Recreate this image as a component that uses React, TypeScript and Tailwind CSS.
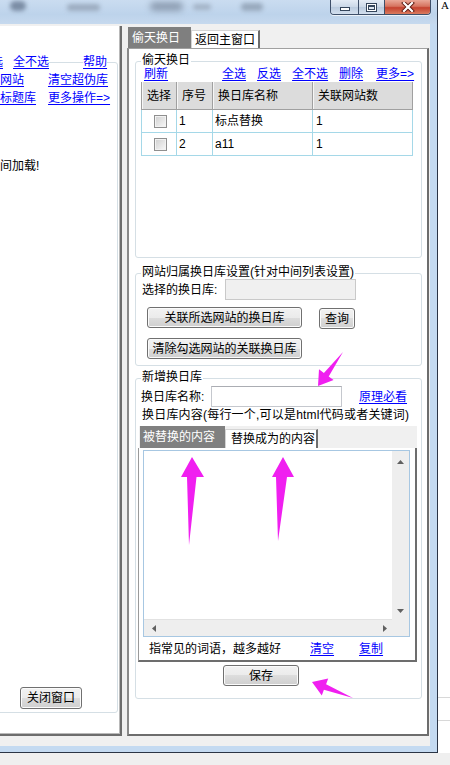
import React from "react";

function Link({ children, className = "" }: { children: React.ReactNode; className?: string }) {
  return (
    <span className={`text-[#0000ff] underline underline-offset-[2px] whitespace-nowrap leading-[14px] h-[14px] ${className}`}>
      {children}
    </span>
  );
}

function Btn({ children, className = "" }: { children: React.ReactNode; className?: string }) {
  return (
    <div
      className={`flex items-center justify-center rounded-[3px] border border-[#707070] bg-[linear-gradient(#f2f2f2,#ebebeb_50%,#dddddd_50%,#cfcfcf)] shadow-[inset_0_0_0_1px_#fbfbfb] whitespace-nowrap leading-[14px] shrink-0 ${className}`}
    >
      {children}
    </div>
  );
}

function Group({ title, className = "", children }: { title: string; className?: string; children?: React.ReactNode }) {
  return (
    <div className={`border border-[#d5dfe5] rounded-[3px] flex flex-col shrink-0 ${className}`}>
      <div className="-mt-[9px] ml-[5px] self-start bg-white px-[1px] leading-[14px] h-[14px] whitespace-nowrap">{title}</div>
      {children}
    </div>
  );
}

function CheckBox() {
  return (
    <div className="w-[13px] h-[13px] border border-[#8f8f8f] bg-[linear-gradient(135deg,#cfcfcf,#f9f9f9)] shadow-[inset_0_0_0_1px_#f2f2f2]" />
  );
}

function TitleBar() {
  return (
    <div className="h-[24px] flex items-start bg-[linear-gradient(180deg,#cadcf0,#bdd3eb_60%,#c6d9ee)] overflow-hidden shrink-0">
      <div className="ml-[10px] mt-[1px] w-[16px] h-[10px] rounded-full bg-[#7b8da5] blur-[2px]" />
      <div className="ml-[41px] mt-[4px] w-[33px] h-[7px] rounded-full bg-[#9cacc0] blur-[2px]" />
      <div className="ml-[50px] mt-[2px] w-[33px] h-[9px] rounded-full bg-[#8d9db2] blur-[3px]" />
      <div className="ml-[10px] mt-[4px] w-[18px] h-[6px] rounded-full bg-[#a3b3c6] blur-[2px]" />
      <div className="ml-[30px] mt-[3px] w-[22px] h-[8px] rounded-full bg-[#98a9bd] blur-[2px]" />
      <div className="ml-auto mr-[6px] flex h-[15px] rounded-b-[4px] border border-t-0 border-[#3e4f69] overflow-hidden shadow-[0_1px_0_rgba(255,255,255,0.7)]">
        <div className="w-[28px] bg-[linear-gradient(#e4ecf6,#cbd8e8_50%,#b9cade_50%,#d3dfee)] border-r border-[#3e4f69] flex items-center justify-center">
          <div className="mt-[4px] w-[10px] h-[4px] bg-white border border-[#35465c]" />
        </div>
        <div className="w-[26px] bg-[linear-gradient(#e4ecf6,#cbd8e8_50%,#b9cade_50%,#d3dfee)] border-r border-[#3e4f69] flex items-center justify-center">
          <div className="w-[11px] h-[9px] border border-[#35465c] bg-white p-[1px]">
            <div className="w-full h-full border border-[#35465c] border-t-2 bg-[#dfe8f2]" />
          </div>
        </div>
        <div className="w-[45px] bg-[linear-gradient(#eaa898,#d6735f_45%,#c5412e_55%,#d97b5f)] flex items-center justify-center">
          <svg width="14" height="10" viewBox="0 0 14 10">
            <path d="M3 1 L11 9 M11 1 L3 9" stroke="#5b1a12" strokeWidth="4" strokeLinecap="square" />
            <path d="M3 1 L11 9 M11 1 L3 9" stroke="#ffffff" strokeWidth="2.2" strokeLinecap="square" />
          </svg>
        </div>
      </div>
    </div>
  );
}

function LeftPanel() {
  return (
    <div className="w-[122px] h-[710px] mt-[2px] border-r-2 border-b-2 border-[#6d6d6d] overflow-hidden shrink-0">
      <div className="h-full bg-white border-r border-b border-[#b9b9b9] overflow-hidden flex flex-col">
        <div className="ml-[-60px] mt-[36px] w-[178px] h-[651px] shrink-0 border border-[#d5dfe5] rounded-[3px] flex flex-col">
          <div className="-mt-[8px] flex h-[14px] leading-[14px]">
            <Link className="ml-[38px] bg-white">反选</Link>
            <Link className="pl-[10px] bg-white">全不选</Link>
            <Link className="ml-[34px] bg-white">帮助</Link>
          </div>
          <div className="mt-[4px] flex h-[14px] leading-[14px]">
            <Link className="ml-[59px]">网站</Link>
            <Link className="ml-[24px]">清空超伪库</Link>
          </div>
          <div className="mt-[4px] flex h-[14px] leading-[14px]">
            <Link className="ml-[59px]">标题库</Link>
            <Link className="ml-[12px]">更多操作=&gt;</Link>
          </div>
          <div className="mt-[54px] ml-[59px] h-[14px] leading-[14px] whitespace-nowrap">间加载!</div>
          <Btn className="mt-auto mb-[3px] ml-[79px] w-[62px] h-[22px]">关闭窗口</Btn>
        </div>
      </div>
    </div>
  );
}

const headCell = "h-[28px] bg-[#dcdcdc] border-r border-b border-[#a0a0a0] shadow-[inset_1px_0_0_#f6f6f6] flex items-center pl-[5px] whitespace-nowrap";
const bodyCell = "h-[23px] border-r border-b border-[#a5d8e8] flex items-center pl-[2px] whitespace-nowrap";

function UpArrow() {
  return (
    <svg width="7" height="4" viewBox="0 0 7 4">
      <polygon points="3.5,0 7,4 0,4" fill="#606060" />
    </svg>
  );
}
function DownArrow() {
  return (
    <svg width="7" height="4" viewBox="0 0 7 4">
      <polygon points="0,0 7,0 3.5,4" fill="#606060" />
    </svg>
  );
}
function LeftArrow() {
  return (
    <svg width="4" height="7" viewBox="0 0 4 7">
      <polygon points="4,0 4,7 0,3.5" fill="#606060" />
    </svg>
  );
}
function RightArrow() {
  return (
    <svg width="4" height="7" viewBox="0 0 4 7">
      <polygon points="0,0 4,3.5 0,7" fill="#606060" />
    </svg>
  );
}

function MainTabs() {
  return (
    <div className="ml-[5px] w-[302px] mt-[2px] h-[710px] flex flex-col shrink-0">
      <div className="h-[22px] flex items-end shrink-0">
        <div className="ml-[1px] w-[63px] h-[21px] bg-[#7f7f7f] text-white pl-[4px] flex items-center leading-[14px] whitespace-nowrap">偷天换日</div>
        <div className="w-[69px] h-[18px] bg-white border-t border-l border-[#d4d4d4] border-r-2 border-r-[#6d6d6d] pl-[3px] flex items-center leading-[14px] whitespace-nowrap">返回主窗口</div>
      </div>
      <div className="flex-1 bg-white border-t border-t-[#a0a0a0] border-l-2 border-r-2 border-b-2 border-l-[#8a8a8a] border-r-[#6d6d6d] border-b-[#6d6d6d] flex flex-col pl-[6px]">
        {/* Group 1 */}
        <Group title="偷天换日" className="mt-[12px] w-[287px] h-[197px]">
          <div className="flex h-[14px] leading-[14px] pl-[8px]">
            <Link>刷新</Link>
            <Link className="ml-[54px]">全选</Link>
            <Link className="ml-[11px]">反选</Link>
            <Link className="ml-[11px]">全不选</Link>
            <Link className="ml-[11px]">删除</Link>
            <Link className="ml-[13px]">更多=&gt;</Link>
          </div>
          <div className="ml-[5px] mt-[1px] w-[272px] grid grid-cols-[36px_36px_100px_100px]">
            <div className={`${headCell} border-l`}>选择</div>
            <div className={headCell}>序号</div>
            <div className={headCell}>换日库名称</div>
            <div className={headCell}>关联网站数</div>

            <div className={`${bodyCell} border-l justify-center pl-0`}><CheckBox /></div>
            <div className={bodyCell}>1</div>
            <div className={bodyCell}>标点替换</div>
            <div className={`${bodyCell} pl-[3px]`}>1</div>

            <div className={`${bodyCell} border-l justify-center pl-0`}><CheckBox /></div>
            <div className={bodyCell}>2</div>
            <div className={bodyCell}>a11</div>
            <div className={`${bodyCell} pl-[3px]`}>1</div>
          </div>
        </Group>

        {/* Group 2 */}
        <Group title="网站归属换日库设置(针对中间列表设置)" className="mt-[15px] w-[287px] h-[93px]">
          <div className="flex items-center h-[21px] pl-[6px]">
            <div className="w-[83px] leading-[14px] whitespace-nowrap">选择的换日库:</div>
            <div className="w-[131px] h-[21px] bg-[#f0f0f0] border border-[#c9c9c9]" />
          </div>
          <div className="mt-[7px] flex items-start pl-[11px]">
            <Btn className="w-[155px] h-[21px]">关联所选网站的换日库</Btn>
            <Btn className="ml-[17px] mt-[1px] w-[36px] h-[21px]">查询</Btn>
          </div>
          <Btn className="mt-[9px] ml-[11px] self-start w-[155px] h-[21px]">清除勾选网站的关联换日库</Btn>
        </Group>

        {/* Group 3 */}
        <Group title="新增换日库" className="mt-[12px] w-[287px] h-[321px]">
          <div className="mt-[2px] flex items-center h-[21px] pl-[5px]">
            <div className="w-[70px] leading-[14px] whitespace-nowrap">换日库名称:</div>
            <div className="w-[131px] h-[21px] bg-white border border-[#c5c8ce] border-t-[#abadb3]" />
            <Link className="ml-[17px]">原理必看</Link>
          </div>
          <div className="mt-[1px] pl-[6px] h-[14px] leading-[14px] whitespace-nowrap tracking-[0.2px]">换日库内容(每行一个,可以是html代码或者关键词)</div>
          <div className="mt-[4px] ml-[3px] w-[278px] h-[22px] bg-[#f0f0f0] flex items-end shrink-0">
            <div className="ml-[1px] w-[85px] h-[22px] bg-[#808080] text-white pl-[3px] flex items-center leading-[14px] whitespace-nowrap">被替换的内容</div>
            <div className="w-[93px] h-[19px] bg-white border-t border-l border-[#d4d4d4] border-r-2 border-r-[#6d6d6d] pl-[5px] flex items-center leading-[14px] whitespace-nowrap">替换成为的内容</div>
          </div>
          <div className="ml-[2px] w-[279px] h-[214px] shrink-0 bg-white border-l border-l-[#9a9a9a] border-r-2 border-b-2 border-r-[#6d6d6d] border-b-[#6d6d6d] flex flex-col">
            <div className="mt-[2px] ml-[4px] w-[267px] h-[187px] border border-[#a7c7e2] flex flex-col shrink-0">
              <div className="flex-1 flex">
                <div className="flex-1 bg-white" />
                <div className="w-[17px] bg-[#eeeeee] flex flex-col items-center justify-between pt-[9px] pb-[6px]">
                  <UpArrow />
                  <DownArrow />
                </div>
              </div>
              <div className="h-[17px] flex">
                <div className="flex-1 bg-[#eeeeee] border-t border-[#e2e2e2] flex items-center justify-between pl-[8px] pr-[5px]">
                  <LeftArrow />
                  <RightArrow />
                </div>
                <div className="w-[17px] bg-[#eeeeee]" />
              </div>
            </div>
            <div className="mt-[5px] flex h-[14px] leading-[14px] pl-[10px]">
              <span className="whitespace-nowrap">指常见的词语，越多越好</span>
              <Link className="ml-[29px]">清空</Link>
              <Link className="ml-[25px]">复制</Link>
            </div>
          </div>
          <Btn className="mt-[3px] ml-[87px] self-start w-[76px] h-[21px]">保存</Btn>
        </Group>
      </div>
    </div>
  );
}

function RightStrip() {
  return (
    <div className="flex-1 bg-white flex flex-col">
      <div className="pl-[3px] h-[11px] leading-[11px] text-[11px] font-['Liberation_Serif',serif] overflow-hidden">A</div>
      <div className="mt-[686px] h-px bg-[#d8d8d8]" />
      <div className="mt-[22px] h-px bg-[#d8d8d8]" />
    </div>
  );
}

function Arrows() {
  return (
    <svg className="absolute left-0 top-0 pointer-events-none" width="450" height="765" viewBox="0 0 450 765">
      <polygon fill="#f01ff0" points="318,386 333.6,380.1 328.7,376.5 343,352 323.9,372.9 319,369.3" />
      <polygon fill="#f01ff0" points="192,457 204,477 196.5,477 189,545 187,477 181,477" />
      <polygon fill="#f01ff0" points="283,457 294,477 287,477 278,541 276,477 272,477" />
      <polygon fill="#f01ff0" points="312,682 328.2,678.6 326.1,684.2 353,698 323.9,689.8 321.8,695.4" />
    </svg>
  );
}

export default function App() {
  return (
    <div className="relative w-[450px] h-[765px] overflow-hidden bg-white text-[12px] text-black font-['Liberation_Sans','Noto_Sans_CJK_SC',sans-serif]">
      <div className="flex h-[753px]">
        <div className="w-[438px] h-[753px] flex flex-col border-r border-b border-[#2a3445] shrink-0">
          <TitleBar />
          <div className="flex-1 bg-[#c4daf1] pr-[7px] pb-[6px] flex flex-col">
            <div className="flex-1 flex bg-[#f0f0f0]">
              <LeftPanel />
              <MainTabs />
            </div>
          </div>
        </div>
        <RightStrip />
      </div>
      <div className="h-[12px] bg-[#efefef]" />
      <Arrows />
    </div>
  );
}
